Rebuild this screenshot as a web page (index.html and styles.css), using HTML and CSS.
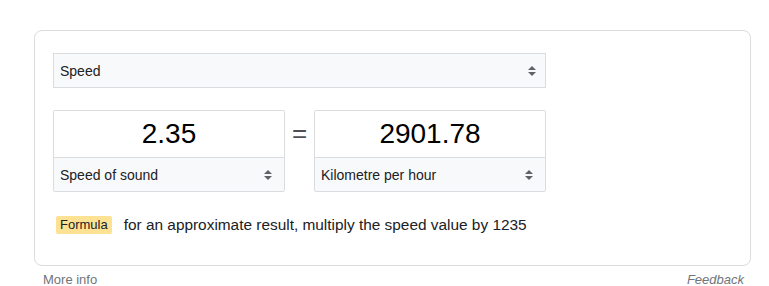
FILE: index.html
```html
<!DOCTYPE html>
<html lang="en">
<head>
  <meta charset="UTF-8">
  <title>Unit Converter</title>
  <link rel="stylesheet" href="styles.css">
</head>
<body>

  <div class="card">
    <div class="select select-wide">
      <span>Speed</span>
      <svg class="arrows" width="8" height="12" viewBox="0 0 8 12"><polygon points="0,5 4,1 8,5"/><polygon points="0,7 4,11 8,7"/></svg>
    </div>

    <div class="converter">
      <div class="unit-box">
        <input class="value" type="text" value="2.35">
        <div class="select">
          <span>Speed of sound</span>
          <svg class="arrows" width="8" height="12" viewBox="0 0 8 12"><polygon points="0,5 4,1 8,5"/><polygon points="0,7 4,11 8,7"/></svg>
        </div>
      </div>

      <div class="equals">=</div>

      <div class="unit-box">
        <input class="value" type="text" value="2901.78">
        <div class="select">
          <span>Kilometre per hour</span>
          <svg class="arrows" width="8" height="12" viewBox="0 0 8 12"><polygon points="0,5 4,1 8,5"/><polygon points="0,7 4,11 8,7"/></svg>
        </div>
      </div>
    </div>

    <div class="formula">
      <span class="badge">Formula</span>
      <span class="formula-text">for an approximate result, multiply the speed value by 1235</span>
    </div>
  </div>

  <div class="footer">
    <a href="#">More info</a>
    <a href="#" class="feedback">Feedback</a>
  </div>

</body>
</html>
```

FILE: styles.css
```css
* {
  box-sizing: border-box;
}

body {
  font-family: Arial, "Liberation Sans", sans-serif;
  margin: 0;
  padding: 30px 0 0 34px;
  background-color: #ffffff;
  color: #202124;
}

.card {
  width: 717px;
  height: 236px;
  border: 1px solid #dadce0;
  border-radius: 8px;
  padding: 22px 18px;
}

.select {
  display: flex;
  align-items: center;
  justify-content: space-between;
  height: 34px;
  padding: 0 12px 0 6px;
  background-color: #f8f9fa;
  font-size: 14px;
  color: #202124;
}

.select-wide {
  width: 493px;
  height: 35px;
  border: 1px solid #dadce0;
  padding-right: 9px;
}

.arrows {
  fill: #5f6368;
}

.converter {
  display: flex;
  align-items: flex-start;
  margin-top: 22px;
}

.unit-box {
  width: 232px;
  border: 1px solid #dadce0;
  border-radius: 2px;
  overflow: hidden;
}

.value {
  display: block;
  width: 100%;
  height: 46px;
  border: none;
  outline: none;
  text-align: center;
  font-family: Arial, "Liberation Sans", sans-serif;
  font-size: 28px;
  color: #000000;
  background-color: #ffffff;
  padding: 0;
}

.unit-box .select {
  border-top: 1px solid #dadce0;
  height: 34px;
}

.equals {
  width: 29px;
  height: 46px;
  line-height: 46px;
  text-align: center;
  font-size: 26px;
  color: #4d5156;
}

.formula {
  display: flex;
  align-items: center;
  margin-top: 24px;
  margin-left: 3px;
}

.badge {
  background-color: #fde293;
  border-radius: 2px;
  font-size: 13px;
  height: 18px;
  line-height: 18px;
  padding: 0 4px;
  color: #202124;
}

.formula-text {
  margin-left: 12px;
  font-size: 15.4px;
  color: #202124;
}

.footer {
  width: 717px;
  display: flex;
  justify-content: space-between;
  margin-top: 8px;
  padding: 0 7px 0 9px;
  font-size: 13px;
  line-height: 11px;
}

.footer a {
  color: #70757a;
  text-decoration: none;
}

.feedback {
  font-style: italic;
}
```
